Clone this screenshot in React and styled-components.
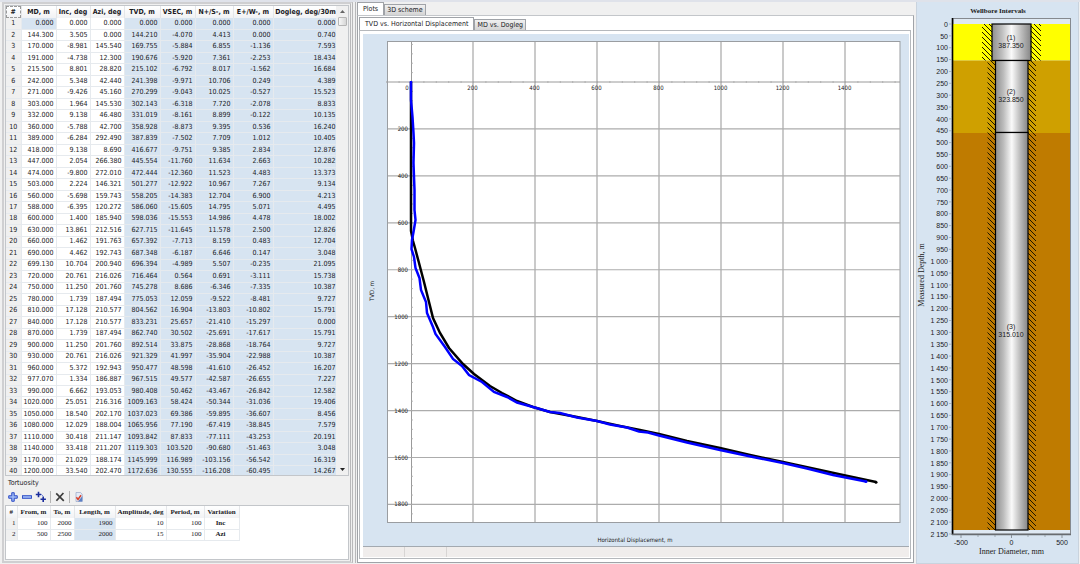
import React from "react";
import styled, { createGlobalStyle } from "styled-components";

const GlobalStyle = createGlobalStyle`
  * {
    box-sizing: border-box;
  }
  body {
    margin: 0;
    background: #f0f0f0;
    color: #1a1a1e;
    font-family: "DejaVu Sans Condensed", "Noto Sans", sans-serif;
    font-size: 7px;
  }
  button {
    font: inherit;
    color: inherit;
    padding: 0;
  }
`;

const surveyColumns = [
  { title: "MD, m", width: 35 },
  { title: "Inc, deg", width: 34 },
  { title: "Azi, deg", width: 34 },
  { title: "TVD, m", width: 36, computed: true },
  { title: "VSEC, m", width: 35, computed: true },
  { title: "N+/S-, m", width: 38, computed: true },
  { title: "E+/W-, m", width: 40, computed: true },
  { title: "Dogleg, deg/30m", width: 65, computed: true },
];

const survey = `0.000 0.000 0.000 0.000 0.000 0.000 0.000 0.000
144.300 3.505 0.000 144.210 -4.070 4.413 0.000 0.740
170.000 -8.981 145.540 169.755 -5.884 6.855 -1.136 7.593
191.000 -4.738 12.300 190.676 -5.920 7.361 -2.253 18.434
215.500 8.801 28.820 215.102 -6.792 8.017 -1.562 16.684
242.000 5.348 42.440 241.398 -9.971 10.706 0.249 4.389
271.000 -9.426 45.160 270.299 -9.043 10.025 -0.527 15.523
303.000 1.964 145.530 302.143 -6.318 7.720 -2.078 8.833
332.000 9.138 46.480 331.019 -8.161 8.899 -0.122 10.135
360.000 -5.788 42.700 358.928 -8.873 9.395 0.536 16.240
389.000 -6.284 292.490 387.839 -7.502 7.709 1.012 10.405
418.000 9.138 8.690 416.677 -9.751 9.385 2.834 12.876
447.000 2.054 266.380 445.554 -11.760 11.634 2.663 10.282
474.000 -9.800 272.010 472.444 -12.360 11.523 4.483 13.373
503.000 2.224 146.321 501.277 -12.922 10.967 7.267 9.134
560.000 -5.698 159.743 558.205 -14.383 12.704 6.900 4.213
588.000 -6.395 120.272 586.060 -15.605 14.795 5.071 4.495
600.000 1.400 185.940 598.036 -15.553 14.986 4.478 18.002
630.000 13.861 212.516 627.715 -11.645 11.578 2.500 12.826
660.000 1.462 191.763 657.392 -7.713 8.159 0.483 12.704
690.000 4.462 192.743 687.348 -6.187 6.646 0.147 3.048
699.130 10.704 200.940 696.394 -4.989 5.507 -0.235 21.095
720.000 20.761 216.026 716.464 0.564 0.691 -3.111 15.738
750.000 11.250 201.760 745.278 8.686 -6.346 -7.335 10.387
780.000 1.739 187.494 775.053 12.059 -9.522 -8.481 9.727
810.000 17.128 210.577 804.562 16.904 -13.803 -10.802 15.791
840.000 17.128 210.577 833.231 25.657 -21.410 -15.297 0.000
870.000 1.739 187.494 862.740 30.502 -25.691 -17.617 15.791
900.000 11.250 201.760 892.514 33.875 -28.868 -18.764 9.727
930.000 20.761 216.026 921.329 41.997 -35.904 -22.988 10.387
960.000 5.372 192.943 950.477 48.598 -41.610 -26.452 16.207
977.070 1.334 186.887 967.515 49.577 -42.587 -26.655 7.227
990.000 6.662 193.053 980.408 50.462 -43.467 -26.842 12.582
1020.000 25.051 216.316 1009.163 58.424 -50.344 -31.036 19.406
1050.000 18.540 202.170 1037.023 69.386 -59.895 -36.607 8.456
1080.000 12.029 188.004 1065.956 77.190 -67.419 -38.845 7.579
1110.000 30.418 211.147 1093.842 87.833 -77.111 -43.253 20.191
1140.000 33.418 211.207 1119.303 103.520 -90.680 -51.463 3.048
1170.000 21.029 188.174 1145.999 116.989 -103.156 -56.542 16.319
1200.000 33.540 202.470 1172.636 130.555 -116.208 -60.495 14.267`
  .split("\n")
  .map((line) => line.split(" "));

const tortuosityColumns = [
  { title: "From, m", width: 33 },
  { title: "To, m", width: 24 },
  { title: "Length, m", width: 41, computed: true },
  { title: "Amplitude, deg", width: 51 },
  { title: "Period, m", width: 38 },
  { title: "Variation", width: 35 },
];

const tortuosity = [
  ["100", "2000", "1900", "10", "100", "Inc"],
  ["500", "2500", "2000", "15", "100", "Azi"],
];

const plannedPath =
  "411,82 411,231 413,241 415,248 419,263 424,282 429,302 433,318 440,333 449,348 463,364 474,374 490,386 502,393 517,401 533,407 550,412 577,417 597,421 620,426 640,430 659,434 687,441 720,448 750,455 783,462 820,470 843,475 876,482";

const actualPath =
  "411,81 411,100 412.5,117 413.5,133 414,143 413.5,163 414,177 414.5,190 414.5,210 415.5,220 413.5,232 412,240 411.5,249 414,257 415.5,268 419.5,278 421,290 426,302 427,313 433,327 435.5,334 445,347 453,359 462,366 469,375 482,382 494,392 507,397 517,402.5 533,407 550,412 560,413 577,417.5 597,421 610,424.5 627,427.5 639,431.5 648,432.5 659,435.5 687,442.5 720,450 753,457 783,463 807,468.5 833,475 866,481.5";

const range = (from, to, step) => {
  const list = [];
  for (let v = from; v <= to; v += step) list.push(v);
  return list;
};

const DataTable = ({ columns, rows, label, numberWidth, serif, fill }) => (
  <Table aria-label={label} $serif={serif} $fill={fill}>
    <colgroup>
      <Col $width={numberWidth} />
      {columns.map((c) => (
        <Col key={c.title} $width={c.width} />
      ))}
    </colgroup>
    <thead>
      <tr>
        <HeadCell $corner={!serif}>#</HeadCell>
        {columns.map((c) => (
          <HeadCell key={c.title}>{c.title}</HeadCell>
        ))}
      </tr>
    </thead>
    <tbody>
      {rows.map((row, r) => (
        <tr key={r}>
          <NumberCell $serif={serif}>{r + 1}</NumberCell>
          {row.map((value, c) => (
            <Cell
              key={c}
              $blue={columns[c].computed || (!serif && r === 0 && c === 0)}
              $center={columns[c].title === "Variation"}
            >
              {value}
            </Cell>
          ))}
        </tr>
      ))}
    </tbody>
  </Table>
);

const PlusShape = ({ x, y, s }) => (
  <path
    transform={`translate(${x} ${y}) scale(${s})`}
    d="M-1.3-4.5H1.3V-1.3H4.5V1.3H1.3V4.5H-1.3V1.3H-4.5V-1.3H-1.3Z"
    fill="#9db8f5"
    stroke="#2747c4"
    strokeWidth="1"
  />
);

const Toolbar = () => (
  <ToolRow>
    <ToolButton aria-label="Add">
      <svg width="12" height="12">
        <PlusShape x={6} y={6} s={0.95} />
      </svg>
    </ToolButton>
    <ToolButton aria-label="Remove">
      <svg width="12" height="12">
        <rect x="1.5" y="4.7" width="9" height="2.6" fill="#9db8f5" stroke="#2747c4" strokeWidth="0.9" />
      </svg>
    </ToolButton>
    <ToolButton aria-label="Add several">
      <svg width="12" height="12">
        <path d="M3.5 0.8V6.2M0.8 3.5H6.2M8.2 5.6V11M5.5 8.3H10.9" stroke="#1a2c9c" strokeWidth="1.6" />
        <path d="M6.2 3.2L8 5" stroke="#5871d6" strokeWidth="0.8" />
      </svg>
    </ToolButton>
    <Divider />
    <ToolButton aria-label="Delete">
      <svg width="12" height="12">
        <path d="M2.2 2.4L9.8 9.8M9.4 2L2.4 9.8" stroke="#3c3c3c" strokeWidth="1.7" />
      </svg>
    </ToolButton>
    <Divider />
    <ToolButton aria-label="Check">
      <svg width="12" height="12">
        <path d="M3 1.5H7.5L9.2 3.2V10.5H3Z" fill="#e4ebf7" stroke="#9aa8c8" strokeWidth="0.7" />
        <path d="M5 10.5H9.4V5Z" fill="#5b7fc4" />
        <path d="M3.4 6.3L5 8.4L8 4.2" fill="none" stroke="#d8402a" strokeWidth="1.5" />
      </svg>
    </ToolButton>
  </ToolRow>
);

const DisplacementChart = () => {
  const sx = (v) => 411 + v * 0.31;
  const sy = (v) => 82 + v * 0.2347;
  return (
    <Drawing viewBox="363 34 546 512" role="img" aria-label="TVD vs. Horizontal Displacement">
      <rect x="387.5" y="41.5" width="512.5" height="481" fill="#fff" stroke="#9a9da1" />
      {range(200, 1400, 200).map((v) => (
        <path key={v} d={`M${sx(v)} 42V522`} stroke="#b4b4b4" strokeWidth="1.4" />
      ))}
      {range(200, 1800, 200).map((v) => (
        <path key={v} d={`M388 ${sy(v)}H900`} stroke="#acacac" strokeWidth="1.2" />
      ))}
      <path d="M411.5 42V522M388 82H900" stroke="#9a9a9a" fill="none" />
      {range(-80, 1560, 40).map((v) => (
        <path key={v} d={`M${sx(v) + 0.5} 81v2`} stroke="#aaa" strokeWidth="0.8" />
      ))}
      {range(-160, 1840, 40).map((v) => (
        <path key={v} d={`M411 ${sy(v)}h2`} stroke="#aaa" strokeWidth="0.8" />
      ))}
      {range(0, 1400, 200).map((v) => (
        <ChartText key={v} x={v ? sx(v) - 0.5 : 407} y="90" $anchor="middle" $small>
          {v}
        </ChartText>
      ))}
      {range(200, 1800, 200).map((v) => (
        <ChartText key={v} x="408" y={sy(v) + 2} $anchor="end" $small>
          {v}
        </ChartText>
      ))}
      <polyline points={plannedPath} fill="none" stroke="#000" strokeWidth="2.5" />
      <circle cx="876" cy="482.3" r="1.5" />
      <polyline points={actualPath} fill="none" stroke="#0000ff" strokeWidth="2.5" />
      <circle cx="866" cy="481.5" r="1.5" fill="#0000ff" />
      <ChartText x="635" y="542" $anchor="middle" $small>
        Horizontal Displacement, m
      </ChartText>
      <ChartText transform="translate(374 291) rotate(-90)" $anchor="middle" $small>
        TVD, m
      </ChartText>
    </Drawing>
  );
};

const formatDepth = (v) => (v < 1000 ? v : `${Math.floor(v / 1000)} ${String(v % 1000).padStart(3, "0")}`);

const WellboreChart = () => {
  const depth = (v) => 24 + v * 0.2372;
  const casings = [
    { x: 992, y: 24, w: 39, h: 36.5, hatch: 10, id: "(1)", size: "387.350", label: 40 },
    { x: 995.5, y: 60.5, w: 32.5, h: 72, hatch: 8, id: "(2)", size: "323.850", label: 94 },
    { x: 995.5, y: 132.5, w: 32.5, h: 397.5, hatch: 8, id: "(3)", size: "315.010", label: 329 },
  ];
  return (
    <Drawing viewBox="917 2 161 561" role="img" aria-label="Wellbore Intervals">
      <defs>
        <linearGradient id="pipe">
          <stop offset="0" stopColor="#8f8f8f" />
          <stop offset="0.25" stopColor="#bdbdbd" />
          <stop offset="0.5" stopColor="#fafafa" />
          <stop offset="0.75" stopColor="#bdbdbd" />
          <stop offset="1" stopColor="#858585" />
        </linearGradient>
        <pattern id="hatch" width="5" height="5" patternUnits="userSpaceOnUse">
          <path d="M-1-1L6 6M-1 4L1 6M4-1L6 1" stroke="#1c1400" strokeWidth="1" />
        </pattern>
      </defs>
      <ChartText x="998" y="13" $anchor="middle" $serif $bold>
        Wellbore Intervals
      </ChartText>
      <rect x="953" y="18.5" width="117.5" height="515.5" fill="#dfe9f3" stroke="#85898f" />
      <rect x="953" y="24" width="117" height="36.5" fill="#ffff00" />
      <rect x="953" y="60.5" width="117" height="72.5" fill="#cfa000" />
      <rect x="953" y="133" width="117" height="397" fill="#bf7b00" />
      <path d="M952.5 18V535" stroke="#000" strokeWidth="1.6" />
      <path d="M952 534.5H1071" stroke="#686c70" strokeWidth="1.6" />
      {casings.map((c) => (
        <g key={c.id}>
          <rect x={c.x - c.hatch} y={c.y} width={c.hatch} height={c.h} fill="url(#hatch)" />
          <rect x={c.x + c.w} y={c.y} width={c.hatch} height={c.h} fill="url(#hatch)" />
          <rect x={c.x} y={c.y} width={c.w} height={c.h} fill="url(#pipe)" stroke="#000" strokeWidth="1.2" />
          <ChartText x="1011" y={c.label} $anchor="middle" $arial>
            {c.id}
          </ChartText>
          <ChartText x="1011" y={c.label + 8} $anchor="middle" $arial>
            {c.size}
          </ChartText>
        </g>
      ))}
      {range(0, 2150, 10).map((v) => (
        <path key={v} d={`M${v % 50 ? 951 : 949} ${depth(v)}H952`} stroke="#8b9299" strokeWidth="0.6" />
      ))}
      {range(0, 2150, 50).map((v) => (
        <ChartText key={v} x="948" y={depth(v) + 2.7} $anchor="end" $arial>
          {formatDepth(v)}
        </ChartText>
      ))}
      {range(-500, 500, 500).map((v) => (
        <g key={v}>
          <path d={`M${1011.5 + v * 0.101} 535v3`} stroke="#8b9299" />
          <ChartText x={1011.5 + v * 0.101} y="545" $anchor="middle" $arial>
            {v}
          </ChartText>
        </g>
      ))}
      {[978, 995, 1028, 1045].map((x) => (
        <path key={x} d={`M${x} 535v2`} stroke="#8b9299" strokeWidth="0.7" />
      ))}
      <ChartText x="1011.5" y="554" $anchor="middle" $serif $large>
        Inner Diameter, mm
      </ChartText>
      <ChartText transform="translate(924 275) rotate(-90)" $anchor="middle" $serif $large>
        Measured Depth, m
      </ChartText>
    </Drawing>
  );
};

const App = () => {
  return (
    <>
      <GlobalStyle />
      <Window>
        <DataFrame>
          <SurveyBox>
            <SurveyScroll>
              <DataTable
                label="Survey"
                columns={surveyColumns}
                rows={survey}
                numberWidth={15}
                fill
              />
            </SurveyScroll>
            <ScrollBar>
              <ScrollArrow aria-label="Scroll up">
                <svg width="5" height="3">
                  <path d="M0 3L2.5 0L5 3Z" fill="#666" />
                </svg>
              </ScrollArrow>
              <ScrollThumb />
              <ScrollArrow aria-label="Scroll down">
                <svg width="5" height="3">
                  <path d="M0 0L2.5 3L5 0Z" fill="#222" />
                </svg>
              </ScrollArrow>
            </ScrollBar>
          </SurveyBox>
          <GroupTitle>Tortuosity</GroupTitle>
          <Toolbar />
          <TortuosityBox>
            <DataTable
              label="Tortuosity"
              columns={tortuosityColumns}
              rows={tortuosity}
              numberWidth={11}
              serif
            />
          </TortuosityBox>
        </DataFrame>

        <PlotFrame>
          <TabList role="tablist">
            <Tab role="tab" aria-selected="true" $active>
              Plots
            </Tab>
            <Tab role="tab" aria-selected="false">
              3D scheme
            </Tab>
          </TabList>
          <OuterPane>
            <TabList role="tablist">
              <Tab role="tab" aria-selected="true" $active>
                TVD vs. Horizontal Displacement
              </Tab>
              <Tab role="tab" aria-selected="false">
                MD vs. Dogleg
              </Tab>
            </TabList>
            <InnerPane>
              <ChartArea>
                <DisplacementChart />
              </ChartArea>
              <StatusBar>
                <StatusCell />
                <StatusCell />
              </StatusBar>
            </InnerPane>
          </OuterPane>
        </PlotFrame>

        <WellFrame>
          <WellboreChart />
        </WellFrame>
      </Window>
    </>
  );
};

const Window = styled.main`
  display: grid;
  grid-template-columns: 355px minmax(0, 1fr) 164px;
  height: 100vh;
  min-height: 560px;
  border-top: 2px solid #dfe2ea;
  overflow: hidden;
`;

const DataFrame = styled.section`
  display: flex;
  flex-direction: column;
  min-height: 0;
  margin: 0 2px 1px 2px;
  border: 2px solid #cfcfd1;
  border-right: 3px double #b8b8ba;
  padding: 1px;
`;

const SurveyBox = styled.div`
  display: flex;
  flex: 1;
  min-height: 0;
  overflow: hidden;
  border: 1px solid #c3c6ca;
  background: #fff;
`;

const SurveyScroll = styled.div`
  flex: 1;
  min-width: 0;
`;

/* the filled table runs a little past its box, so the last row is cut */
const Table = styled.table`
  table-layout: fixed;
  border-collapse: collapse;
  width: ${(p) => (p.$fill ? "100%" : "233px")};
  height: ${(p) => (p.$fill ? "calc(100% + 3px)" : "auto")};
  font-family: ${(p) => (p.$serif ? '"Liberation Serif", serif' : "inherit")};
`;

const Col = styled.col`
  width: ${(p) => p.$width}px;
`;

const HeadCell = styled.th`
  padding: 0;
  height: 12px;
  line-height: 9px;
  background: linear-gradient(#fff, #f1f2f4);
  border-right: 1px solid #e4e6e9;
  font-weight: 700;
  white-space: nowrap;
  outline: ${(p) => (p.$corner ? "1px dashed #999" : "none")};
  outline-offset: -1px;
`;

const Cell = styled.td`
  padding: 0 2px 0 0;
  height: 11px;
  line-height: 9px;
  text-align: ${(p) => (p.$center ? "center" : "right")};
  font-weight: ${(p) => (p.$center ? 700 : 400)};
  background: ${(p) => (p.$blue ? "#d7e4f1" : "#fff")};
  border-right: 1px solid #e6eaee;
  border-bottom: 1px solid #e6eaee;
`;

const NumberCell = styled(Cell)`
  padding: 0 1px;
  text-align: ${(p) => (p.$serif ? "right" : "center")};
  background: #f0f0f0;
`;

const ScrollBar = styled.div`
  display: flex;
  flex-direction: column;
  align-items: center;
  width: 12px;
  background: #f0f0f0;
`;

const ScrollArrow = styled.button`
  display: flex;
  align-items: center;
  justify-content: center;
  width: 100%;
  height: 11px;
  border: 0;
  background: transparent;

  &:last-child {
    margin-top: auto;
  }
`;

const ScrollThumb = styled.div`
  width: 9px;
  height: 9px;
  border: 1px solid #b5b5b5;
  border-radius: 1px;
  background: linear-gradient(90deg, #f8f8f8, #d6d6d6);
`;

const GroupTitle = styled.h2`
  margin: 2px 0 0 3px;
  font-size: 7px;
  font-weight: 400;
  line-height: 10px;
`;

const ToolRow = styled.div`
  display: flex;
  align-items: center;
  gap: 2px;
  height: 17px;
  padding-left: 2px;
`;

const ToolButton = styled.button`
  display: flex;
  width: 12px;
  height: 12px;
  border: 0;
  background: transparent;
`;

const Divider = styled.span`
  width: 1px;
  height: 12px;
  margin: 0 1px;
  background: #b4b4b4;
`;

const TortuosityBox = styled.div`
  height: 55px;
  border: 1px solid #c3c6ca;
  background: #fff;
`;

const PlotFrame = styled.section`
  display: flex;
  flex-direction: column;
  min-width: 0;
  min-height: 0;
  margin: 0 2px 1px 0;
  padding-left: 1px;
  border-left: 1px solid #b8b8ba;
`;

const TabList = styled.div`
  display: flex;
  align-items: flex-end;
  height: 13px;
`;

const Tab = styled.button`
  height: ${(p) => (p.$active ? 13 : 11)}px;
  padding: 0 ${(p) => (p.$active ? 5 : 2)}px;
  border: 1px solid #a0a3a8;
  border-bottom: 0;
  background: ${(p) => (p.$active ? "#fff" : "linear-gradient(#f0f0f0, #d4d4d4)")};
  line-height: 9px;
  white-space: nowrap;
`;

const OuterPane = styled.div`
  display: flex;
  flex: 1;
  flex-direction: column;
  min-height: 0;
  padding: 1px 2px 3px 1px;
  border: 1px solid #a0a3a8;
  border-top-color: #c3c6ca;
  background: #fff;
`;

const InnerPane = styled.div`
  display: flex;
  flex: 1;
  flex-direction: column;
  min-height: 0;
  padding: 3px 1px 1px 3px;
  border: 1px solid #b5b8bc;
`;

const ChartArea = styled.div`
  flex: 1;
  min-height: 0;
  background: #d7e4f1;
  border-bottom: 1px solid #a3a9b0;
`;

const StatusBar = styled.footer`
  display: flex;
  height: 10px;
  background: #f0edec;
`;

const StatusCell = styled.div`
  width: 42px;
  border-right: 1px solid #d8d5d4;
`;

const WellFrame = styled.section`
  min-height: 0;
  margin-right: 1px;
  border: 1px solid #c9d3de;
  border-top: 0;
  background: #d7e4f1;
`;

const Drawing = styled.svg`
  display: block;
  width: 100%;
  height: 100%;
`;

const textSize = (p) => {
  if (p.$small) return 6;
  return p.$large ? 8 : 7;
};

const ChartText = styled.text`
  fill: #1a1a1a;
  font-family: ${(p) =>
    p.$serif
      ? '"Liberation Serif", serif'
      : p.$arial
        ? '"Liberation Sans", sans-serif'
        : '"DejaVu Sans Condensed", "Noto Sans", sans-serif'};
  font-size: ${textSize}px;
  font-weight: ${(p) => (p.$bold ? 700 : 400)};
  text-anchor: ${(p) => p.$anchor};
`;

export default App;
